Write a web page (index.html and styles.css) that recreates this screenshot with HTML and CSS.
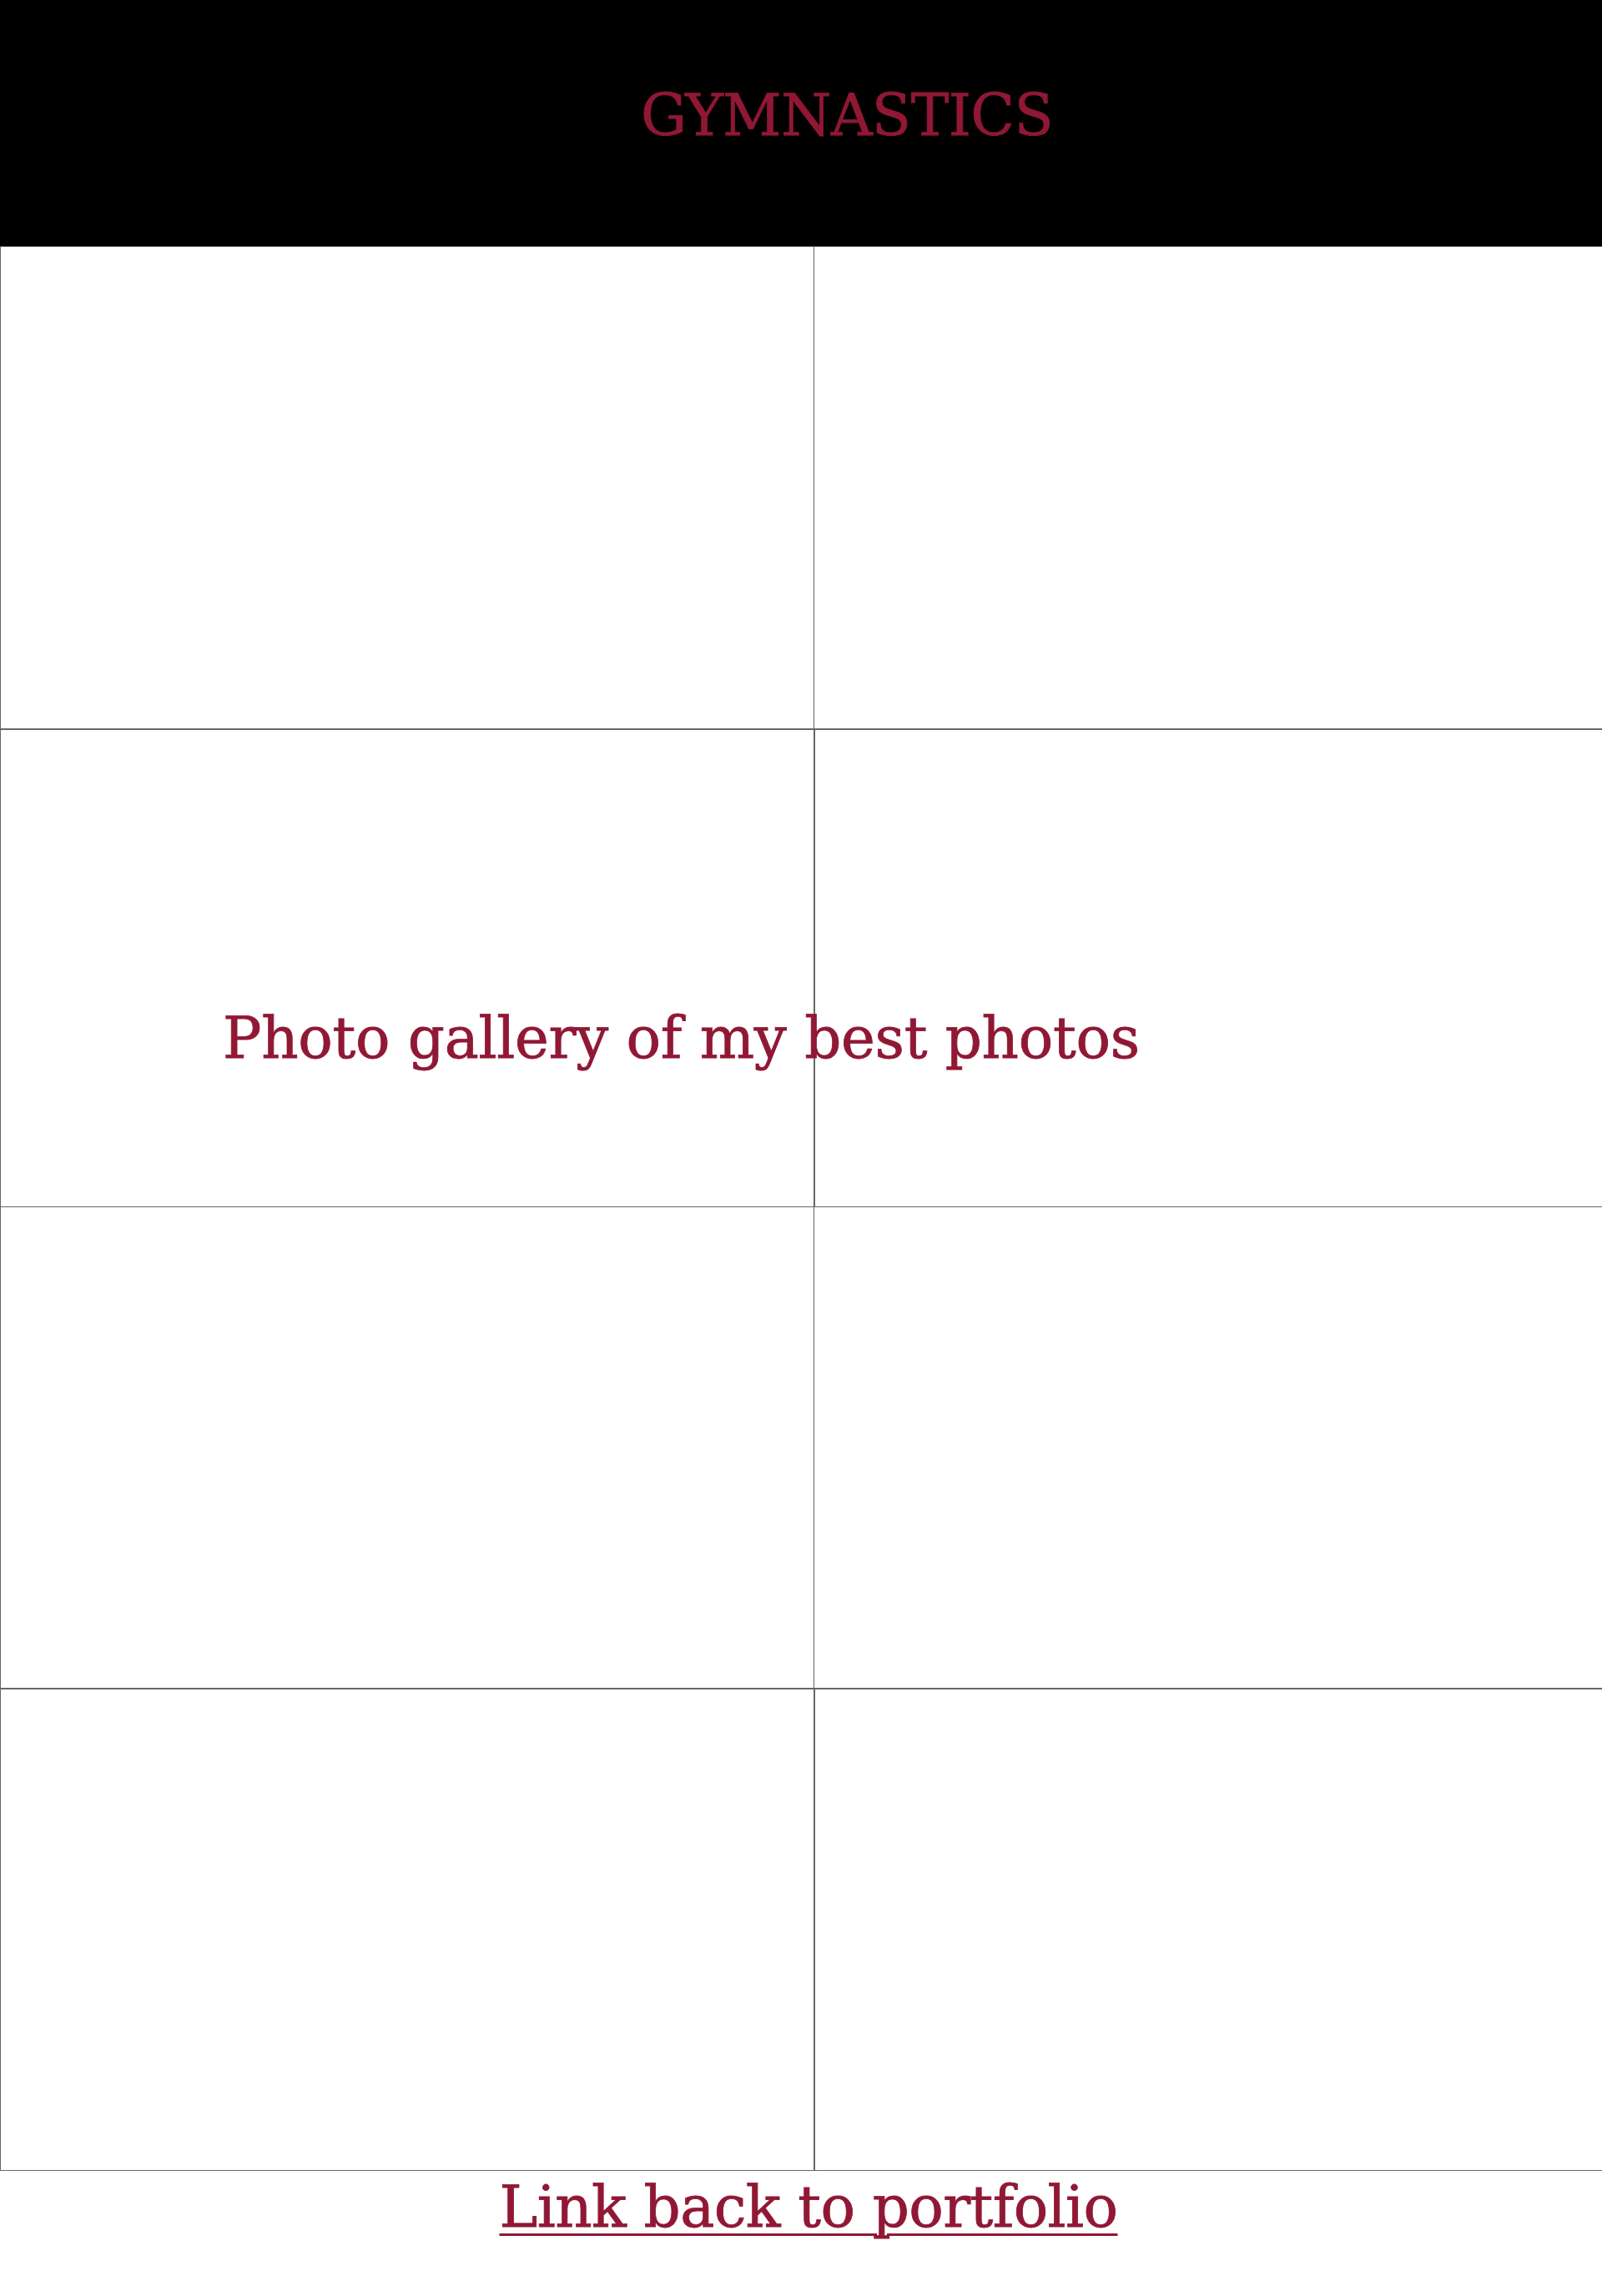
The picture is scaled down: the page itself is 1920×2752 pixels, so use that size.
FILE: index.html
```html
<!DOCTYPE html>
<html lang="en">
<head>
<meta charset="utf-8">
<title>Gymnastics</title>
<link rel="stylesheet" href="styles.css">
</head>
<body>
<header class="masthead">
  <h1 class="title">GYMNASTICS</h1>
</header>
<main class="gallery">
  <div class="cell row-a"></div>
  <div class="cell row-a right"></div>
  <div class="cell row-b"></div>
  <div class="cell row-b right"></div>
  <div class="cell row-a"></div>
  <div class="cell row-a right"></div>
  <div class="cell row-b"></div>
  <div class="cell row-b right"></div>
  <p class="caption">Photo gallery of my best photos</p>
</main>
<footer class="foot">
  <a class="back" href="#">Link back to portfolio</a>
</footer>
</body>
</html>
```
FILE: styles.css
```css
html, body {
  margin: 0;
  padding: 0;
  background: #ffffff;
}
body {
  font-family: "Rockwell", "DejaVu Serif", serif;
  color: #901834;
  width: 1920px;
  overflow: hidden;
}
.masthead {
  background: #000000;
  height: 295px;
  display: flex;
  justify-content: center;
  padding-left: 110px;
  box-sizing: border-box;
}
.title {
  margin: 0;
  padding-top: 104px;
  font-size: 69px;
  font-weight: normal;
  letter-spacing: -0.7px;
  line-height: 1;
  color: #901834;
  -webkit-text-stroke: 0.8px #901834;
}
.gallery {
  position: relative;
  display: grid;
  grid-template-columns: 975px 945px;
  grid-template-rows: 578px 573px 577px 578px;
  border-bottom: 1px solid #666666;
}
.cell {
  border-top: 1px solid #666666;
  border-left: 1px solid #666666;
}
.row-b {
  border-top-width: 2px;
}
.row-b.right {
  border-left-width: 2px;
}
.caption {
  position: absolute;
  left: 267px;
  top: 915px;
  margin: 0;
  font-size: 69px;
  letter-spacing: -0.3px;
  line-height: 1;
  white-space: nowrap;
  -webkit-text-stroke: 0.8px #901834;
}
.foot {
  display: flex;
  justify-content: center;
  padding-top: 2px;
  padding-left: 18px;
}
.back {
  font-size: 69px;
  letter-spacing: -0.6px;
  line-height: 1.2;
  color: #901834;
  text-decoration: underline;
  text-decoration-thickness: 3px;
  text-underline-offset: 8px;
  -webkit-text-stroke: 0.8px #901834;
}
```
